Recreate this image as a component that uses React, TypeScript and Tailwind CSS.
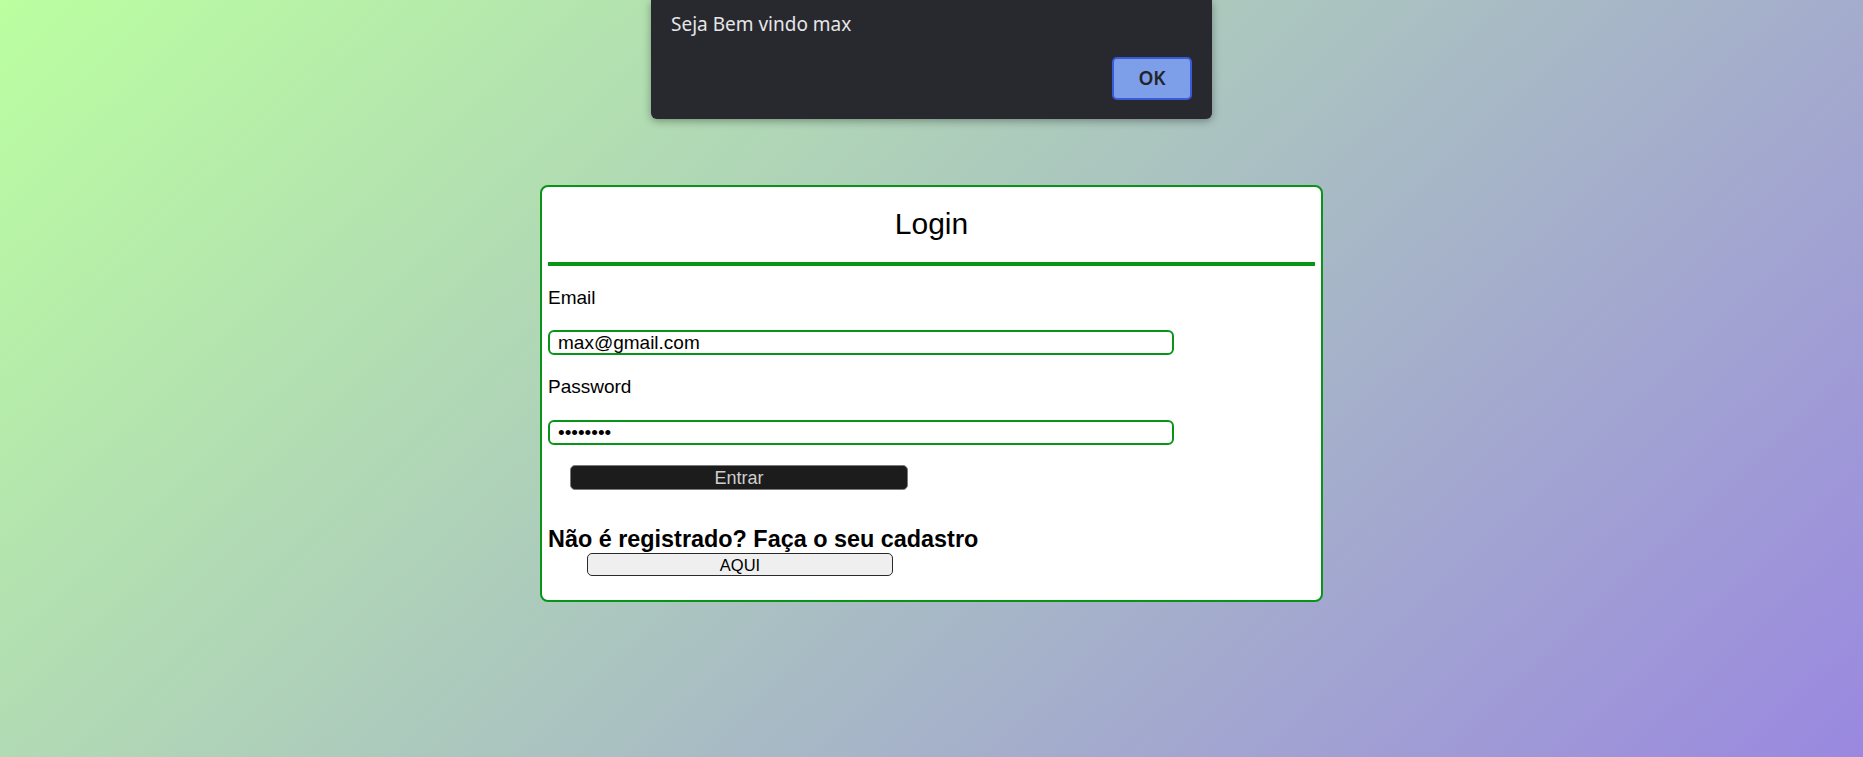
import { useState } from "react"

function AlertBox() {
  return (
    <div className="absolute left-[651px] top-0 w-[561px] h-[119px] bg-[#28292e] rounded-b-[6px] shadow-[0_2px_8px_rgba(0,0,0,0.35)] font-['Noto_Sans',sans-serif]">
      <p className="absolute left-[20px] top-[9px] text-[19px] leading-[30px] text-[#e6e6e8]">Seja Bem vindo max</p>
      <button className="absolute left-[461px] top-[57px] w-[80px] h-[43px] rounded-[5px] border-2 border-[#3a5ad8] bg-[#7d9ee8] text-[19px] font-semibold text-[#23242c]">
        OK
      </button>
    </div>
  )
}

function App() {
  const [email] = useState("max@gmail.com")
  const [senha] = useState("12345678")

  return (
    <div className="relative w-full min-h-screen h-[757px] bg-[linear-gradient(137deg,#bbffa0,#9a88e0)] font-['Liberation_Sans',Arial,sans-serif] text-black">
      <div className="pt-[185px] flex justify-center">
        <div className="w-[783px] bg-white border-[2.5px] border-[#079417] rounded-[8px] px-[6px] py-[5px]">
          <h2 className="mt-[15px] text-center text-[30px] leading-[34px]">Login</h2>
          <div className="mt-[21px] h-[4px] bg-[#079417]"></div>

          <label className="block mt-[21px] text-[19px] leading-[22px]">Email</label>
          <input
            readOnly
            value={email}
            className="block mt-[21px] w-[626px] h-[25px] border-2 border-[#079417] rounded-[6px] px-[8px] text-[19px] leading-[21px] outline-none"
          />

          <label className="block mt-[21px] text-[19px] leading-[22px]">Password</label>
          <input
            readOnly
            type="password"
            value={senha}
            className="block mt-[22px] w-[626px] h-[25px] border-2 border-[#079417] rounded-[6px] px-[8px] text-[19px] leading-[21px] outline-none"
          />

          <button className="block mt-[20px] ml-[22px] w-[338px] h-[25px] bg-[#1c1c1c] border border-[#7a7a7a] rounded-[5px] text-[18px] leading-[20px] text-[#cfcfcf]">
            Entrar
          </button>

          <h3 className="mt-[36px] text-[23.4px] leading-[26px] font-bold">Não é registrado? Faça o seu cadastro</h3>
          <button className="block mt-[1px] mb-[19px] ml-[39px] w-[306px] h-[23px] bg-[#efefef] border-[1.5px] border-[#2a2a2a] rounded-[5px] text-[16.5px] leading-[18px] text-black">
            AQUI
          </button>
        </div>
      </div>

      <AlertBox />
    </div>
  )
}

export default App
